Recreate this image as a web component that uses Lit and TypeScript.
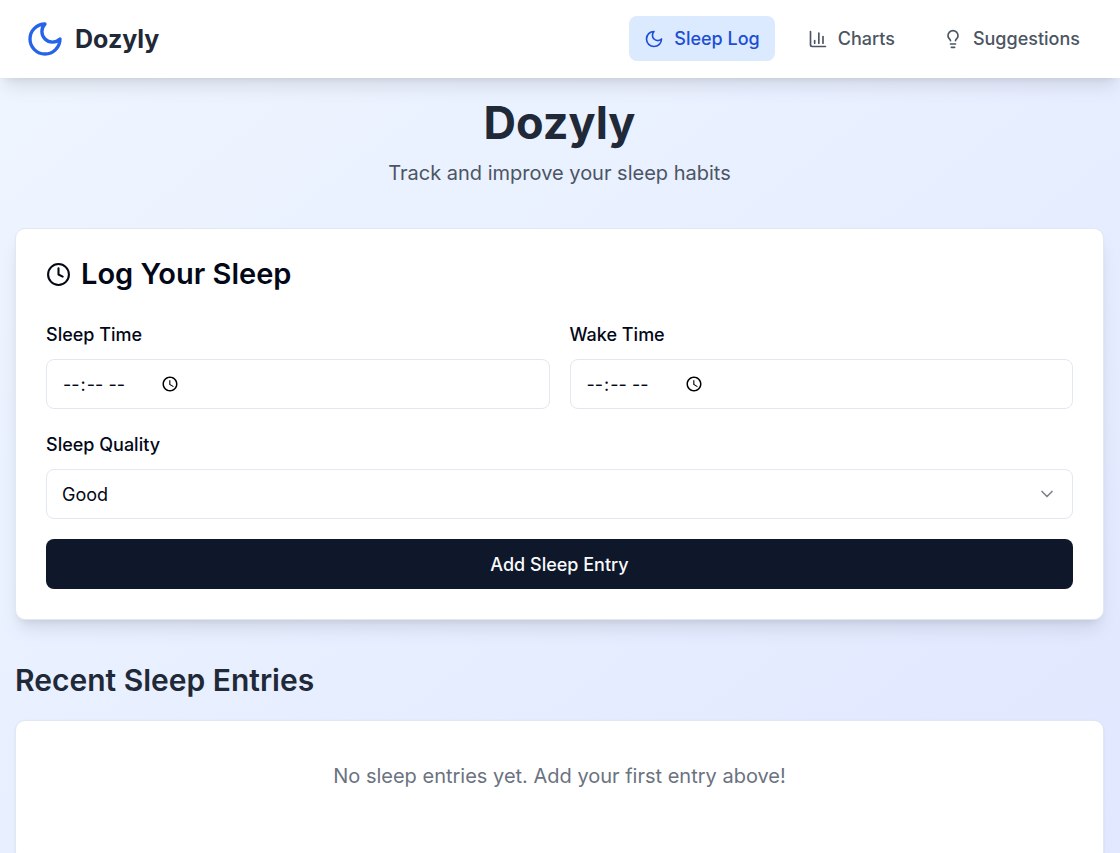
import { LitElement, html, css, svg, nothing } from "lit";
import { customElement, property, state } from "lit/decorators.js";

const icons = {
  moon: svg`<path d="M12 3a6 6 0 0 0 9 9 9 9 0 1 1-9-9Z"></path>`,
  chart: svg`<path d="M3 3v16a2 2 0 0 0 2 2h16"></path><path d="M18 17V9"></path><path d="M13 17V5"></path><path d="M8 17v-3"></path>`,
  bulb: svg`<path d="M15 14c.2-1 .7-1.7 1.5-2.5 1-.9 1.5-2.2 1.5-3.5A6 6 0 0 0 6 8c0 1 .2 2.2 1.5 3.5.7.7 1.3 1.5 1.5 2.5"></path><path d="M9 18h6"></path><path d="M10 22h4"></path>`,
  clock: svg`<circle cx="12" cy="12" r="10"></circle><polyline points="12 6 12 12 16 14"></polyline>`,
  chevron: svg`<path d="m6 9 6 6 6-6"></path>`,
};

type IconName = keyof typeof icons;

@customElement("ui-icon")
class UiIcon extends LitElement {
  @property() name: IconName = "moon";

  static styles = css`
    :host {
      display: block;
      flex: none;
      width: 20px;
      height: 20px;
    }
    .icon {
      display: block;
      width: 100%;
      height: 100%;
      fill: none;
      stroke: currentColor;
      stroke-width: 2;
      stroke-linecap: round;
      stroke-linejoin: round;
    }
  `;

  render() {
    return html`<svg class="icon" viewBox="0 0 24 24" aria-hidden="true">${icons[this.name]}</svg>`;
  }
}

@customElement("app-root")
class AppRoot extends LitElement {
  @state() private page = "log";

  private links: { id: string; label: string; icon: IconName }[] = [
    { id: "log", label: "Sleep Log", icon: "moon" },
    { id: "charts", label: "Charts", icon: "chart" },
    { id: "suggestions", label: "Suggestions", icon: "bulb" },
  ];

  static styles = css`
    :host {
      display: block;
      min-height: 100vh;
      background: linear-gradient(to bottom right, #eff6ff, #e0e7ff);
      color: #020817;
      font-family: Inter, "Liberation Sans", sans-serif;
      font-size: 20px;
      line-height: 30px;
    }
    * {
      box-sizing: border-box;
    }
    .header {
      display: flex;
      align-items: center;
      justify-content: space-between;
      padding: 16px 25px 17px;
      background: #fff;
      box-shadow: 0 12px 18px -4px rgb(0 0 0 / 0.1), 0 5px 8px -5px rgb(0 0 0 / 0.1);
    }
    .brand {
      display: flex;
      align-items: center;
      gap: 10px;
      color: #1f2937;
      font-size: 25px;
      font-weight: 700;
      text-decoration: none;
    }
    .brand-icon {
      width: 40px;
      height: 40px;
      color: #2563eb;
    }
    .nav {
      display: flex;
      gap: 18px;
    }
    .link {
      display: flex;
      align-items: center;
      gap: 10px;
      padding: 10px 15px;
      border-radius: 8px;
      color: #4b5563;
      font-size: 18px;
      font-weight: 500;
      line-height: 25px;
      text-decoration: none;
    }
    .link[aria-current] {
      background: #dbeafe;
      color: #1d4ed8;
    }
    .main {
      padding: 20px 16px 20px 15px;
    }
    .intro {
      margin-bottom: 40px;
      text-align: center;
    }
    .title {
      margin: 0 0 10px;
      color: #1f2937;
      font-size: 45px;
      font-weight: 700;
      line-height: 50px;
    }
    .lead {
      margin: 0;
      color: #4b5563;
    }
    .card {
      border: 1px solid #e2e8f0;
      border-radius: 10px;
      background: #fff;
    }
    .form-card {
      padding: 30px;
      box-shadow: 0 12px 18px -4px rgb(0 0 0 / 0.1), 0 5px 8px -5px rgb(0 0 0 / 0.1);
    }
    .card-title {
      display: flex;
      align-items: center;
      gap: 10px;
      margin: 0 0 30px;
      font-size: 29px;
      font-weight: 600;
      line-height: 30px;
    }
    .title-icon {
      width: 25px;
      height: 25px;
    }
    .form {
      display: grid;
      grid-template-columns: 1fr 1fr;
      gap: 20px;
    }
    .field {
      display: flex;
      flex-direction: column;
      gap: 8px;
    }
    .wide {
      grid-column: 1 / -1;
    }
    .label {
      font-size: 18px;
      font-weight: 500;
      line-height: 32px;
    }
    .control {
      width: 100%;
      height: 50px;
      margin: 0;
      padding: 10px 15px;
      border: 1px solid #e2e8f0;
      border-radius: 8px;
      background: #fff;
      color: #020817;
      font-family: inherit;
      font-size: 18px;
      line-height: 25px;
    }
    .time {
      display: flex;
      align-items: center;
    }
    .time::-webkit-calendar-picker-indicator {
      margin-left: 12px;
    }
    .select-wrap {
      display: grid;
      align-items: center;
    }
    .select-wrap > * {
      grid-area: 1 / 1;
    }
    .select {
      appearance: none;
    }
    .chevron {
      justify-self: end;
      margin-right: 16px;
      opacity: 0.5;
      pointer-events: none;
    }
    .submit {
      height: 50px;
      border: 0;
      border-radius: 8px;
      background: #0f172a;
      color: #f8fafc;
      font-family: inherit;
      font-size: 18px;
      font-weight: 500;
    }
    .section-title {
      margin: 40px 0 20px;
      color: #1f2937;
      font-size: 30px;
      font-weight: 600;
      line-height: 40px;
    }
    .empty {
      padding: 40px 30px 70px;
      color: #6b7280;
      text-align: center;
      box-shadow: 0 1px 3px rgb(0 0 0 / 0.06);
    }
    .empty-text {
      margin: 0;
    }
  `;

  render() {
    return html`
      <header class="header">
        <a class="brand" href="#log"><ui-icon class="brand-icon" name="moon"></ui-icon>Dozyly</a>
        <nav class="nav">
          ${this.links.map(
            (link) => html`<a
              class="link"
              href="#${link.id}"
              aria-current=${this.page === link.id ? "page" : nothing}
              @click=${() => (this.page = link.id)}
              ><ui-icon name=${link.icon}></ui-icon>${link.label}</a
            >`
          )}
        </nav>
      </header>
      <main class="main">
        <div class="intro">
          <h1 class="title">Dozyly</h1>
          <p class="lead">Track and improve your sleep habits</p>
        </div>
        <section class="card form-card">
          <h2 class="card-title"><ui-icon class="title-icon" name="clock"></ui-icon>Log Your Sleep</h2>
          <form class="form" @submit=${(e: Event) => e.preventDefault()}>
            <div class="field">
              <label class="label" for="sleep-time">Sleep Time</label>
              <input class="control time" id="sleep-time" type="time" />
            </div>
            <div class="field">
              <label class="label" for="wake-time">Wake Time</label>
              <input class="control time" id="wake-time" type="time" />
            </div>
            <div class="field wide">
              <label class="label" for="quality">Sleep Quality</label>
              <div class="select-wrap">
                <select class="control select" id="quality">
                  <option>Poor</option>
                  <option>Fair</option>
                  <option selected>Good</option>
                  <option>Excellent</option>
                </select>
                <ui-icon class="chevron" name="chevron"></ui-icon>
              </div>
            </div>
            <button class="submit wide" type="submit">Add Sleep Entry</button>
          </form>
        </section>
        <h2 class="section-title">Recent Sleep Entries</h2>
        <section class="card empty">
          <p class="empty-text">No sleep entries yet. Add your first entry above!</p>
        </section>
      </main>
    `;
  }
}
